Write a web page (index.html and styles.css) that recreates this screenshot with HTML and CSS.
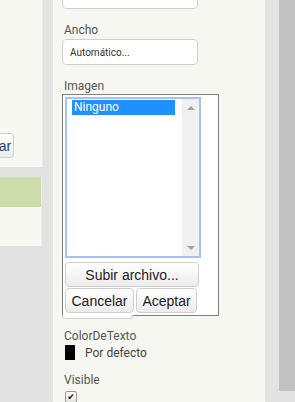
FILE: index.html
```html
<!DOCTYPE html>
<html lang="es">

<head>
    <meta charset="UTF-8">
    <meta name="viewport" content="width=device-width, initial-scale=1.0">
    <title>Propiedades</title>
    <link rel="stylesheet" href="styles.css">
</head>

<body>
    <div class="left">
        <div class="panel top">
            <button class="btn side">Aceptar</button>
        </div>
        <div class="panel bottom">
            <div class="row-sel"></div>
        </div>
    </div>
    <div class="props">
        <div class="textbox first"></div>
        <p class="label">Ancho</p>
        <div class="textbox">Automático...</div>
        <p class="label">Imagen</p>
        <div class="chooser">
            <div class="list">
                <div class="items">
                    <div class="item selected">Ninguno</div>
                </div>
                <div class="scroll">
                    <span class="arrow up"></span>
                    <span class="arrow down"></span>
                </div>
            </div>
            <button class="btn wide">Subir archivo...</button>
            <div class="pair">
                <button class="btn">Cancelar</button>
                <button class="btn">Aceptar</button>
            </div>
        </div>
        <div class="hidden-box"></div>
        <p class="label">ColorDeTexto</p>
        <div class="color">
            <span class="swatch"></span>
            <span>Por defecto</span>
        </div>
        <p class="label">Visible</p>
        <span class="check">✔</span>
    </div>
    <div class="strip"></div>
    <div class="vscroll"></div>
</body>

</html>
```

FILE: styles.css
```css
* {
    padding: 0;
    margin: 0;
    box-sizing: border-box;
}

body {
    width: 295px;
    height: 402px;
    overflow: hidden;
    display: flex;
    font-family: Roboto, "Liberation Sans", Arial, sans-serif;
    background-color: #ebebeb;
    background-image: radial-gradient(#d8d8d8 0.6px, transparent 0.8px);
    background-size: 2px 2px;
}

.left {
    width: 43px;
    flex-shrink: 0;
    display: flex;
    flex-direction: column;
}

.panel {
    background: #f8f8f3;
    border-right: 1px solid #ececec;
}

.panel.top {
    height: 167px;
    padding-top: 133px;
}

.panel.bottom {
    margin-top: 10px;
    height: 69px;
    width: 42px;
}

.row-sel {
    height: 30px;
    background: #cddcab;
}

.btn {
    font-family: "Liberation Sans", Arial, sans-serif;
    font-size: 14px;
    color: #222;
    background: linear-gradient(#ffffff, #ececec);
    border: 1px solid #cfcfcf;
    border-radius: 4px;
    height: 25px;
    cursor: pointer;
}

.btn.side {
    width: 52px;
    margin-left: -38px;
    text-align: right;
    padding-right: 2px;
    color: #1f3f7a;
}

.props {
    width: 212px;
    margin-left: 10px;
    flex-shrink: 0;
    background: #f7f7f2;
    padding-left: 9px;
}

.textbox {
    width: 136px;
    height: 26px;
    background: #fff;
    border: 1px solid #d0d0d0;
    border-radius: 4px;
    font-size: 10px;
    color: #333;
    padding: 7px 0 0 7px;
}

.textbox.first {
    margin-top: -17px;
}

.label {
    font-size: 12px;
    color: #555;
    margin-top: 13px;
    height: 16px;
    line-height: 16px;
    padding-left: 2px;
}

.label+.textbox {
    margin-top: 1px;
}

.chooser {
    width: 157px;
    height: 222px;
    border: 1px solid #808080;
    background: #fff;
    padding: 2px;
}

.list {
    width: 136px;
    height: 161px;
    border: 2px solid #a4c2f4;
    display: flex;
}

.items {
    flex: 1;
    padding: 1px 0 0 5px;
}

.item {
    font-size: 12px;
    height: 15px;
    line-height: 15px;
    padding-left: 2px;
    width: 103px;
}

.item.selected {
    background: #1e90ff;
    color: #fff;
}

.scroll {
    width: 17px;
    background: #f0f0f0;
    display: flex;
    flex-direction: column;
    justify-content: space-between;
    align-items: center;
    padding: 7px 0 6px;
}

.arrow {
    width: 0;
    height: 0;
    border-left: 4px solid transparent;
    border-right: 4px solid transparent;
}

.arrow.up {
    border-bottom: 4px solid #a3a3a3;
}

.arrow.down {
    border-top: 4px solid #a3a3a3;
}

.btn.wide {
    width: 134px;
    margin-top: 4px;
    display: block;
}

.pair {
    display: flex;
    gap: 2px;
    margin-top: 1px;
}

.pair .btn:first-child {
    width: 69px;
}

.pair .btn:last-child {
    width: 61px;
}

.hidden-box {
    width: 71px;
    height: 4px;
    margin-top: -1px;
    border: 1px solid #d0d0d0;
    border-top: none;
    border-radius: 0 0 3px 3px;
    background: #fff;
}

.hidden-box+.label {
    margin-top: 9px;
}

.color {
    display: flex;
    align-items: center;
    gap: 10px;
    font-size: 12px;
    color: #444;
    margin-top: 1px;
    padding-left: 3px;
}

.swatch {
    width: 10px;
    height: 15px;
    background: #000;
}

.color+.label {
    margin-top: 12px;
}

.check {
    display: block;
    width: 12px;
    height: 12px;
    margin: 3px 0 0 3px;
    border: 1px solid #999;
    border-radius: 2px;
    background: linear-gradient(#fff, #e2e2e2);
    font-family: "DejaVu Sans", sans-serif;
    font-size: 9px;
    line-height: 10px;
    text-align: center;
    color: #111;
}

.strip {
    width: 14px;
    flex-shrink: 0;
}

.vscroll {
    width: 16px;
    height: 391px;
    background: #c2c2c2;
}
```
